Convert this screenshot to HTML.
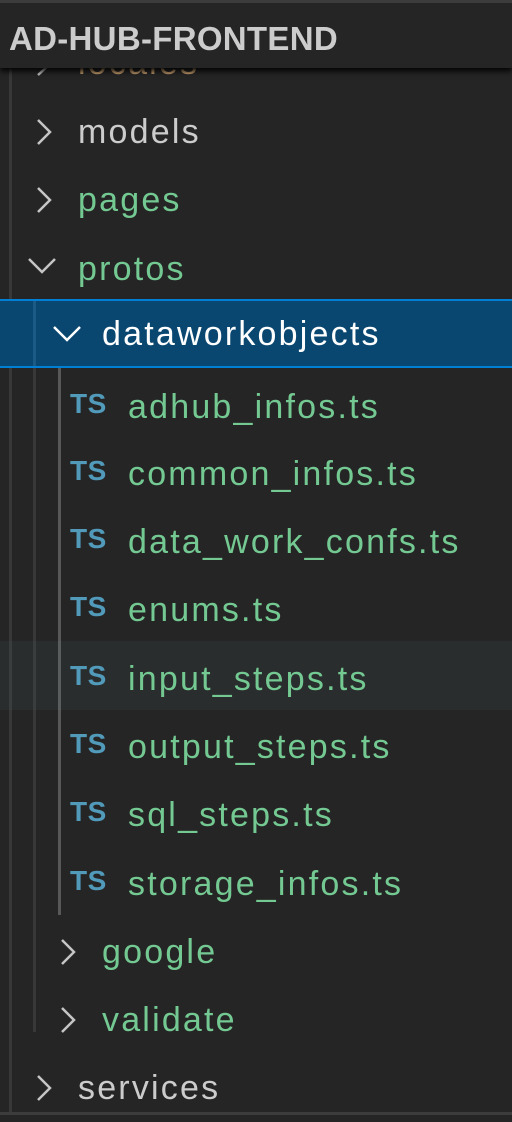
<!DOCTYPE html>
<html><head><style>
body{margin:0;width:512px;height:1115px;overflow:hidden;background:#252526;font-family:"Liberation Sans",sans-serif;position:relative}
.hdr{position:absolute;left:0;top:0;width:512px;height:68px;background:#252526;border-top:3px solid #3c3c3c;box-sizing:border-box;box-shadow:0 3px 6px #000;z-index:5}
.hdr span{position:absolute;left:9px;top:17px;font-weight:bold;font-size:33px;color:#cccccc;letter-spacing:0.3px}
.g{position:absolute;width:3px;background:#383838}
.row{position:absolute;left:0;width:512px;height:68px;}
.t{position:absolute;top:15px;font-size:34px;line-height:38px;white-space:nowrap;letter-spacing:2.2px}
.ts{position:absolute;left:70px;top:15px;font-size:28px;font-weight:bold;color:#519aba;letter-spacing:0.5px}
svg{position:absolute}
</style></head><body>
<div class="g" style="left:9px;top:68px;height:1047px"></div>
<div class="g" style="left:33px;top:300px;height:732px"></div>
<div class="g" style="left:58px;top:368px;height:547px;background:#585858"></div>

<div class="row" style="top:29px"><svg style="left:34px;top:20px" width="20" height="30"><path d="M4 4 L16 15 L4 26" stroke="#c5c5c5" stroke-width="2.5" fill="none"/></svg><div class="t" style="left:78px;color:#c09a6a">locales</div></div>

<div class="hdr"><span>AD-HUB-FRONTEND</span></div>

<div class="row" style="top:98px"><svg style="left:34px;top:20px" width="20" height="30"><path d="M4 2 L16 14 L4 26" stroke="#c5c5c5" stroke-width="2.5" fill="none"/></svg><div class="t" style="left:78px;color:#cccccc">models</div></div>
<div class="row" style="top:166px"><svg style="left:34px;top:20px" width="20" height="30"><path d="M4 2 L16 14 L4 26" stroke="#c5c5c5" stroke-width="2.5" fill="none"/></svg><div class="t" style="left:78px;color:#73c991">pages</div></div>
<div class="row" style="top:235px"><svg style="left:26px;top:20px" width="34" height="24"><path d="M3 4 L16 17 L29 4" stroke="#c5c5c5" stroke-width="2.5" fill="none"/></svg><div class="t" style="left:78px;color:#73c991">protos</div></div>
<div class="row" style="top:299px;height:69px;background:#094771;border-top:2px solid #007fd4;border-bottom:2px solid #007fd4;box-sizing:border-box"><svg style="left:51px;top:22px" width="34" height="24"><path d="M3 4 L16 17 L29 4" stroke="#ffffff" stroke-width="2.5" fill="none"/></svg><div class="t" style="left:102px;top:14px;color:#ffffff">dataworkobjects</div></div>
<div class="g" style="left:33px;top:301px;height:65px;background:#1b5a85"></div>

<div class="row" style="top:373px"><span class="ts">TS</span><div class="t" style="left:128px;color:#73c991">adhub_infos.ts</div></div>
<div class="row" style="top:440px"><span class="ts">TS</span><div class="t" style="left:128px;color:#73c991">common_infos.ts</div></div>
<div class="row" style="top:508px"><span class="ts">TS</span><div class="t" style="left:128px;color:#73c991">data_work_confs.ts</div></div>
<div class="row" style="top:576px"><span class="ts">TS</span><div class="t" style="left:128px;color:#73c991">enums.ts</div></div>
<div class="row" style="top:641px;height:69px;background:#2a2d2e"></div>
<div class="g" style="left:9px;top:641px;height:69px;background:#3a3d3e"></div>
<div class="g" style="left:33px;top:641px;height:69px;background:#3a3d3e"></div>
<div class="g" style="left:58px;top:641px;height:69px;background:#5a5d5e"></div>
<div class="row" style="top:645px"><span class="ts">TS</span><div class="t" style="left:128px;color:#73c991">input_steps.ts</div></div>
<div class="row" style="top:713px"><span class="ts">TS</span><div class="t" style="left:128px;color:#73c991">output_steps.ts</div></div>
<div class="row" style="top:781px"><span class="ts">TS</span><div class="t" style="left:128px;color:#73c991">sql_steps.ts</div></div>
<div class="row" style="top:850px"><span class="ts">TS</span><div class="t" style="left:128px;color:#73c991">storage_infos.ts</div></div>
<div class="row" style="top:918px"><svg style="left:58px;top:20px" width="20" height="30"><path d="M4 2 L16 14 L4 26" stroke="#c5c5c5" stroke-width="2.5" fill="none"/></svg><div class="t" style="left:102px;color:#73c991">google</div></div>
<div class="row" style="top:986px"><svg style="left:58px;top:20px" width="20" height="30"><path d="M4 2 L16 14 L4 26" stroke="#c5c5c5" stroke-width="2.5" fill="none"/></svg><div class="t" style="left:102px;color:#73c991">validate</div></div>
<div class="row" style="top:1054px"><svg style="left:34px;top:20px" width="20" height="30"><path d="M4 2 L16 14 L4 26" stroke="#c5c5c5" stroke-width="2.5" fill="none"/></svg><div class="t" style="left:78px;color:#cccccc">services</div></div>
<div style="position:absolute;left:0;top:1112px;width:512px;height:3px;background:#3c3c3c"></div>
</body></html>
